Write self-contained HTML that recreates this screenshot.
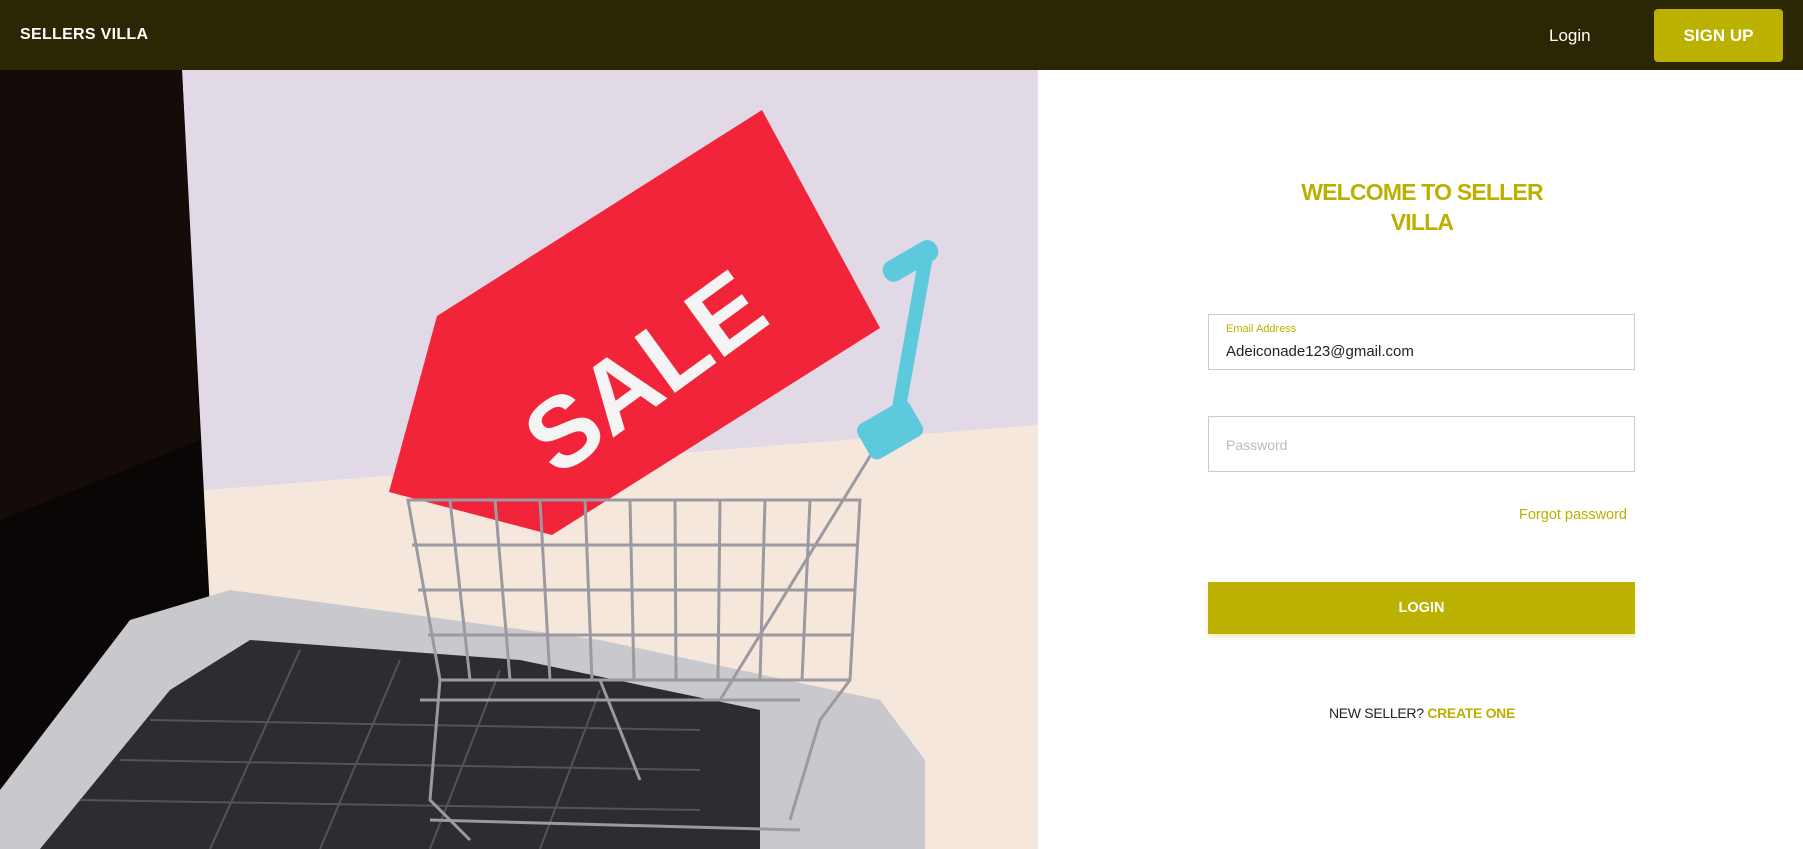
<!DOCTYPE html>
<html><head><meta charset="utf-8"><style>
*{margin:0;padding:0;box-sizing:border-box}
body{width:1803px;height:849px;overflow:hidden;background:#fff;font-family:"Liberation Sans",sans-serif;position:relative}
.hdr{position:absolute;left:0;top:0;width:1803px;height:70px;background:#2b2603}
.brand{position:absolute;left:20px;top:26px;color:#fff;font-weight:bold;font-size:16px;letter-spacing:.3px}
.login{position:absolute;left:1549px;top:26px;color:#fff;font-size:17px}
.signup{position:absolute;left:1654px;top:9px;width:129px;height:53px;background:#bcb000;border-radius:4px;color:#fff;font-weight:bold;font-size:17px;text-align:center;line-height:53px}
.img{position:absolute;left:0;top:70px;width:1038px;height:779px;overflow:hidden}
.title{position:absolute;left:1222px;width:400px;top:177px;text-align:center;color:#bcaf00;font-weight:bold;font-size:23px;line-height:30px;letter-spacing:-.8px}
.field{position:absolute;left:1208px;width:427px;height:56px;border:1.5px solid #ccc}
.lbl{position:absolute;left:17px;top:8px;font-size:11px;color:#bcaf00}
.val{position:absolute;left:17px;top:28px;font-size:15px;color:#222}
.ph{position:absolute;left:17px;top:20px;font-size:14px;color:#bbb}
.forgot{position:absolute;left:1460px;width:167px;text-align:right;top:507px;font-size:14.5px;color:#bcaf00}
.lbtn{position:absolute;left:1208px;top:582px;width:427px;height:52px;background:#bcb000;color:#fff;font-weight:bold;font-size:14.5px;text-align:center;line-height:52px;box-shadow:0 3px 5px rgba(188,176,0,.25)}
.ns{position:absolute;left:1222px;width:400px;text-align:center;top:705px;font-size:14px;color:#222;letter-spacing:-.3px}
.ns b{color:#bcaf00}
</style></head><body>
<div class="hdr"><div class="brand">SELLERS VILLA</div><div class="login">Login</div><div class="signup">SIGN UP</div></div>
<div class="img">
<svg width="1038" height="779" viewBox="0 70 1038 779">
<rect x="0" y="70" width="1038" height="779" fill="#e2d9e7"/>
<polygon points="180,492 1038,425 1038,849 180,849" fill="#f6e7dd"/>
<polygon points="0,70 182,70 210,610 0,790" fill="#0a0606"/>
<polygon points="0,70 182,70 200,440 0,520" fill="#150c0a"/>
<polygon points="130,620 230,590 600,640 880,700 925,760 925,849 0,849 0,790" fill="#c9c8cc"/>
<polygon points="170,690 250,640 520,660 760,710 760,849 40,849" fill="#2e2b33"/>
<g stroke="#55525a" stroke-width="2">
<line x1="150" y1="720" x2="700" y2="730"/><line x1="120" y1="760" x2="700" y2="770"/><line x1="80" y1="800" x2="700" y2="810"/>
<line x1="300" y1="650" x2="210" y2="849"/><line x1="400" y1="660" x2="320" y2="849"/><line x1="500" y1="670" x2="430" y2="849"/><line x1="600" y1="690" x2="540" y2="849"/>
</g>
<polygon points="762,110 880,328 552,535 389,492 437,316" fill="#f2243a"/>
<text x="0" y="0" transform="translate(665,400) rotate(-36)" text-anchor="middle" font-family="Liberation Sans" font-weight="bold" font-size="100" fill="#f4f4f4">SALE</text>
<g stroke="#9a9aa0" stroke-width="3" fill="none">
<polygon points="408,500 860,500 850,680 440,680"/>
<line x1="412" y1="545" x2="858" y2="545"/><line x1="418" y1="590" x2="855" y2="590"/><line x1="428" y1="635" x2="852" y2="635"/>
<line x1="450" y1="500" x2="470" y2="680"/><line x1="495" y1="500" x2="510" y2="680"/><line x1="540" y1="500" x2="550" y2="680"/><line x1="585" y1="500" x2="592" y2="680"/><line x1="630" y1="500" x2="634" y2="680"/><line x1="675" y1="500" x2="676" y2="680"/><line x1="720" y1="500" x2="718" y2="680"/><line x1="765" y1="500" x2="760" y2="680"/><line x1="810" y1="500" x2="802" y2="680"/>
<path d="M440,680 L430,800 L470,840 M600,680 L640,780 M850,680 L820,720 L790,820 M880,440 L720,700"/>
<path d="M420,700 L800,700 M430,820 L800,830"/>
</g>
<line x1="925" y1="262" x2="895" y2="430" stroke="#5cc9dc" stroke-width="14" stroke-linecap="round"/>
<rect x="880" y="250" width="60" height="22" rx="10" fill="#5cc9dc" transform="rotate(-30 910 260)"/>
<rect x="860" y="410" width="60" height="40" rx="8" fill="#5cc9dc" transform="rotate(-30 890 430)"/>
</svg>
</div>
<div class="title">WELCOME TO SELLER<br>VILLA</div>
<div class="field" style="top:314px"><div class="lbl">Email Address</div><div class="val">Adeiconade123@gmail.com</div></div>
<div class="field" style="top:416px"><div class="ph">Password</div></div>
<div class="forgot">Forgot password</div>
<div class="lbtn">LOGIN</div>
<div class="ns">NEW SELLER? <b>CREATE ONE</b></div>
</body></html>
